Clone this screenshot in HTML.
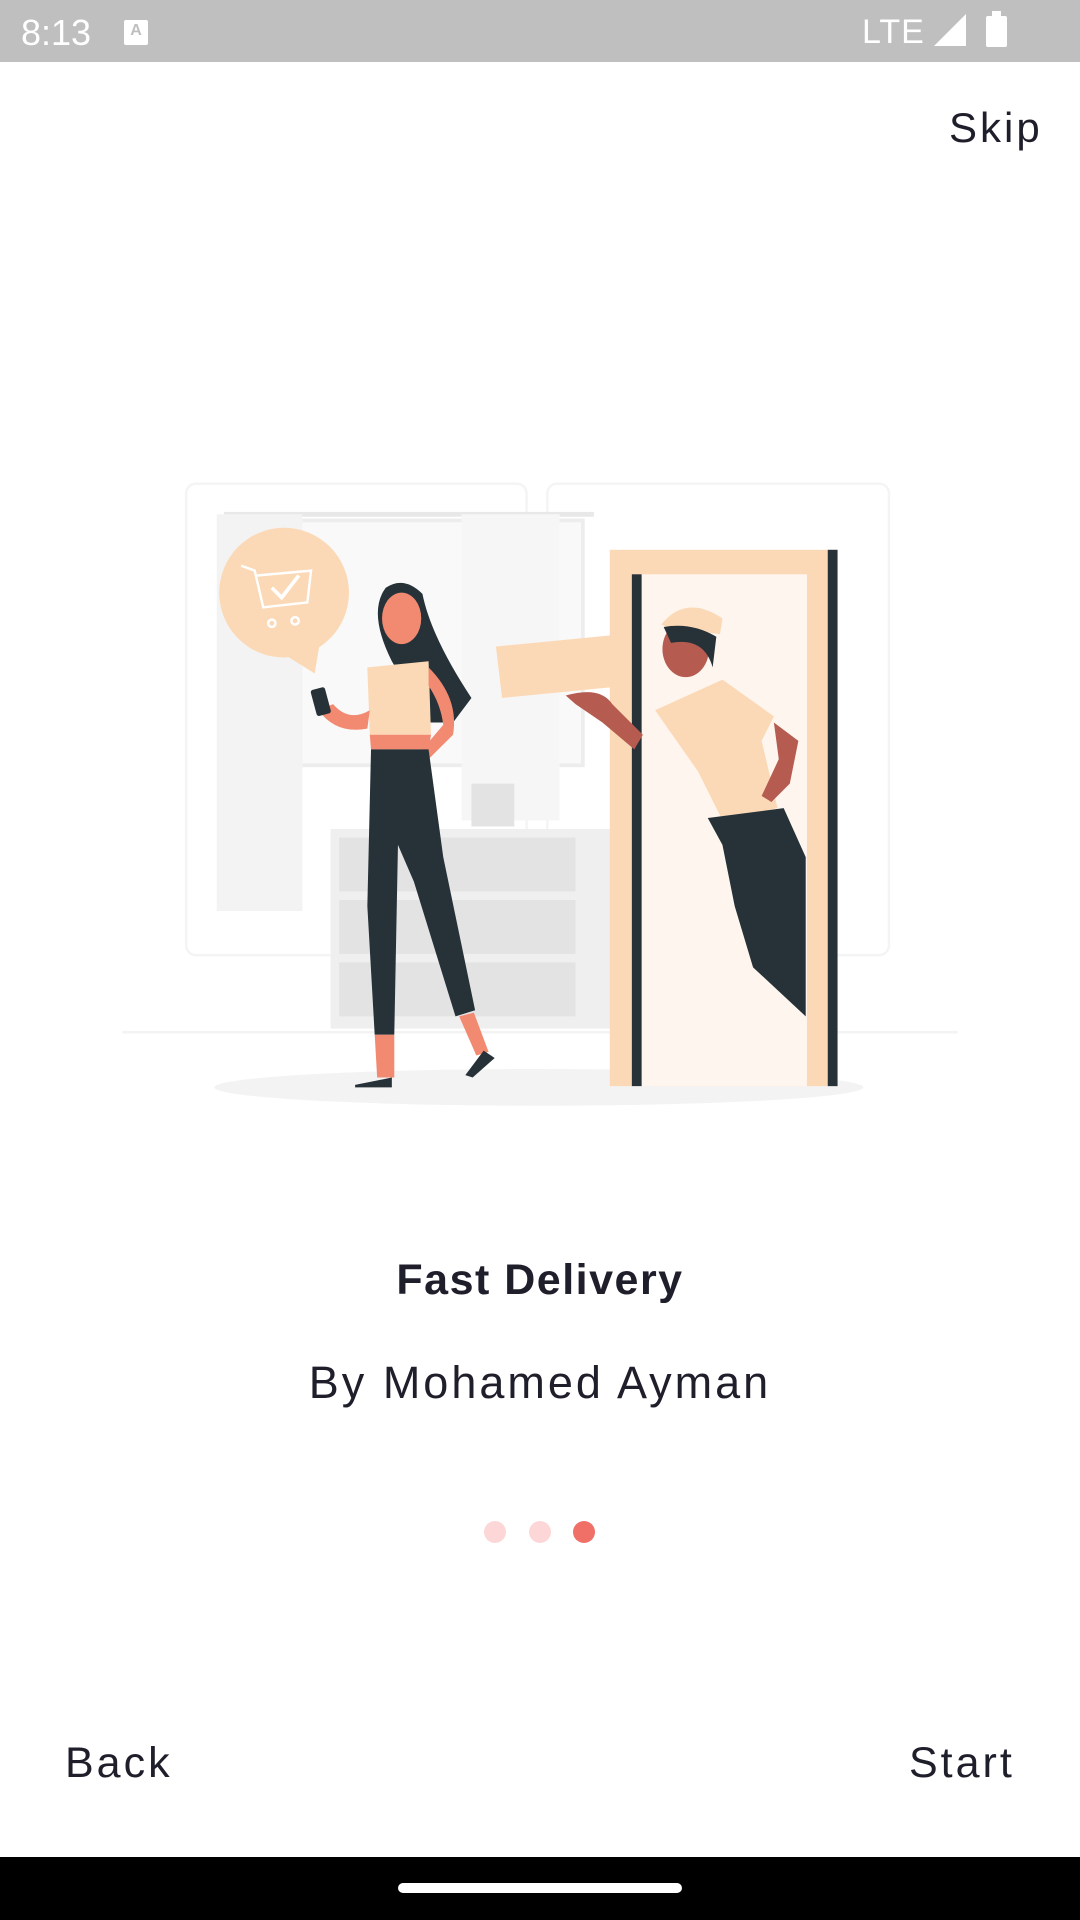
<!DOCTYPE html>
<html><head><meta charset="utf-8"><style>
*{margin:0;padding:0}
body{width:1080px;height:1920px;position:relative;background:#fff;overflow:hidden;font-family:"Liberation Sans",sans-serif;color:#1f1f2b}
.sb{position:absolute;left:0;top:0;width:1080px;height:62px;background:#bfbfbf}
.t{position:absolute;white-space:nowrap}
svg{position:absolute;left:0;top:0}
</style></head><body>
<div class="sb"></div>
<div class="t" style="left:21px;top:12px;font-size:36px;color:#fff">8:13</div>
<div class="t" style="left:124px;top:20px;width:24px;height:25px;background:#fff;border-radius:2px;font-size:16px;color:#bfbfbf;text-align:center;font-weight:bold;line-height:22px">A</div>
<div class="t" style="left:862px;top:13px;font-size:34px;color:#fff;letter-spacing:1px">LTE</div>
<svg width="1080" height="62" style="left:0;top:0"><polygon points="934,46 966,14 966,46" fill="#fff"/><rect x="986" y="16" width="21" height="31" rx="2" fill="#fff"/><rect x="992" y="11" width="9" height="6" fill="#fff"/></svg>

<div class="t" style="left:949px;top:104px;font-size:42px;letter-spacing:3px">Skip</div>

<svg width="1080" height="1920" viewBox="0 0 882 1568" style="top:0">
 <rect x="152" y="395" width="278" height="385" rx="8" fill="none" stroke="#f4f4f4" stroke-width="2"/>
 <rect x="447" y="395" width="279" height="385" rx="8" fill="none" stroke="#f4f4f4" stroke-width="2"/>
 <line x1="100" y1="843" x2="782" y2="843" stroke="#f3f3f3" stroke-width="2"/>
 <rect x="183" y="418" width="302" height="4" fill="#e8e8e8"/>
 <rect x="196" y="425" width="280" height="200" fill="#f9f9f9" stroke="#ededed" stroke-width="3"/>
 <rect x="177" y="420" width="70" height="324" fill="#f3f3f3"/>
 <rect x="377" y="420" width="80" height="250" fill="#f6f6f6"/>
 <rect x="270" y="677" width="230" height="163" fill="#efefef"/>
 <rect x="277" y="684" width="193" height="44" fill="#e3e3e3"/>
 <rect x="277" y="735" width="193" height="44" fill="#e3e3e3"/>
 <rect x="277" y="786" width="193" height="44" fill="#e3e3e3"/>
 <path d="M385 640 h35 v35 h-35z" fill="#e3e3e3"/>
 <ellipse cx="440" cy="888" rx="265" ry="15" fill="#f3f3f3"/>
 <rect x="498" y="449" width="186" height="438" fill="#fcd9b6"/>
 <rect x="516" y="469" width="143" height="418" fill="#fef5ee"/>
 <rect x="516" y="469" width="8" height="418" fill="#263238"/>
 <rect x="676" y="449" width="8" height="438" fill="#263238"/>
 <circle cx="232" cy="484" r="53" fill="#fcd9b6"/>
 <path d="M225 530 L257 550 L262 520z" fill="#fcd9b6"/>
 <path d="M197 462 L208 466 L215 496 L251 492 L254 466 L210 470" fill="none" stroke="#fff" stroke-width="2"/>
 <path d="M222 480 l8 8 l14 -18" fill="none" stroke="#fff" stroke-width="3"/>
 <circle cx="222" cy="509" r="3" fill="none" stroke="#fff" stroke-width="2"/><circle cx="241" cy="507" r="3" fill="none" stroke="#fff" stroke-width="2"/>
 <path d="M315 480 Q330 470 345 485 Q352 520 385 570 L370 590 L350 590 L320 540 Q300 500 315 480z" fill="#263238"/>
 <ellipse cx="328" cy="505" rx="16" ry="21" fill="#f28a72"/>
 <path d="M300 545 L350 540 L352 600 L302 600z" fill="#fcd9b6"/>
 <path d="M302 600 L352 600 L350 612 L303 612z" fill="#f28a72"/>
 <path d="M260 580 Q275 600 300 595 L302 580 Q285 590 272 575z" fill="#f28a72"/>
 <rect x="256" y="562" width="12" height="22" rx="2" fill="#263238" transform="rotate(-15 262 573)"/>
 <path d="M350 545 Q375 570 370 600 L350 620 L345 612 L362 592 Q360 575 350 560z" fill="#f28a72"/>
 <path d="M303 612 L350 612 L362 700 L388 825 L372 830 L338 720 L325 690 L322 845 L306 845 L300 740z" fill="#263238"/>
 <path d="M306 845 h16 v35 h-14z" fill="#f28a72"/><path d="M375 830 l12 -3 l12 32 l-10 3z" fill="#f28a72"/>
 <path d="M290 886 L320 880 L320 888 L290 888z" fill="#263238"/><path d="M380 878 L395 858 L404 864 L386 880z" fill="#263238"/>
 <path d="M405 528 L508 518 L512 560 L410 570z" fill="#fcd9b6"/>
 <path d="M462 568 Q490 560 500 575 L525 600 L518 612 L492 590 L470 575z" fill="#b55b50"/>
 <path d="M535 580 L590 555 L632 585 L622 605 L635 660 L590 670 L570 630z" fill="#fcd9b6"/>
 <path d="M632 590 L652 605 L645 640 L630 655 L622 650 L636 620z" fill="#b55b50"/>
 <ellipse cx="560" cy="530" rx="19" ry="23" fill="#b55b50"/>
 <path d="M540 510 Q560 485 590 505 L588 518 L545 512z" fill="#fcd9b6"/>
 <path d="M542 512 Q565 508 585 520 L582 545 Q575 520 548 525z" fill="#263238"/>
 <path d="M578 668 L640 660 L658 700 L658 830 L615 790 L600 740 L590 690z" fill="#263238"/>
</svg>

<div class="t" style="left:0;width:1080px;text-align:center;top:1256px;font-size:43px;font-weight:bold;letter-spacing:1.5px">Fast Delivery</div>
<div class="t" style="left:0;width:1080px;text-align:center;top:1357px;font-size:45px;letter-spacing:3px">By Mohamed Ayman</div>
<svg width="1080" height="60" style="top:1502px"><circle cx="495" cy="30" r="11" fill="#fdd7d7"/><circle cx="540" cy="30" r="11" fill="#fdd7d7"/><circle cx="584" cy="30" r="11" fill="#f07068"/></svg>
<div class="t" style="left:65px;top:1739px;font-size:43px;letter-spacing:3px">Back</div>
<div class="t" style="left:909px;top:1739px;font-size:43px;letter-spacing:3px">Start</div>
<div style="position:absolute;left:0;top:1857px;width:1080px;height:63px;background:#000"></div>
<div style="position:absolute;left:398px;top:1883px;width:284px;height:10px;border-radius:5px;background:#fff"></div>
</body></html>
